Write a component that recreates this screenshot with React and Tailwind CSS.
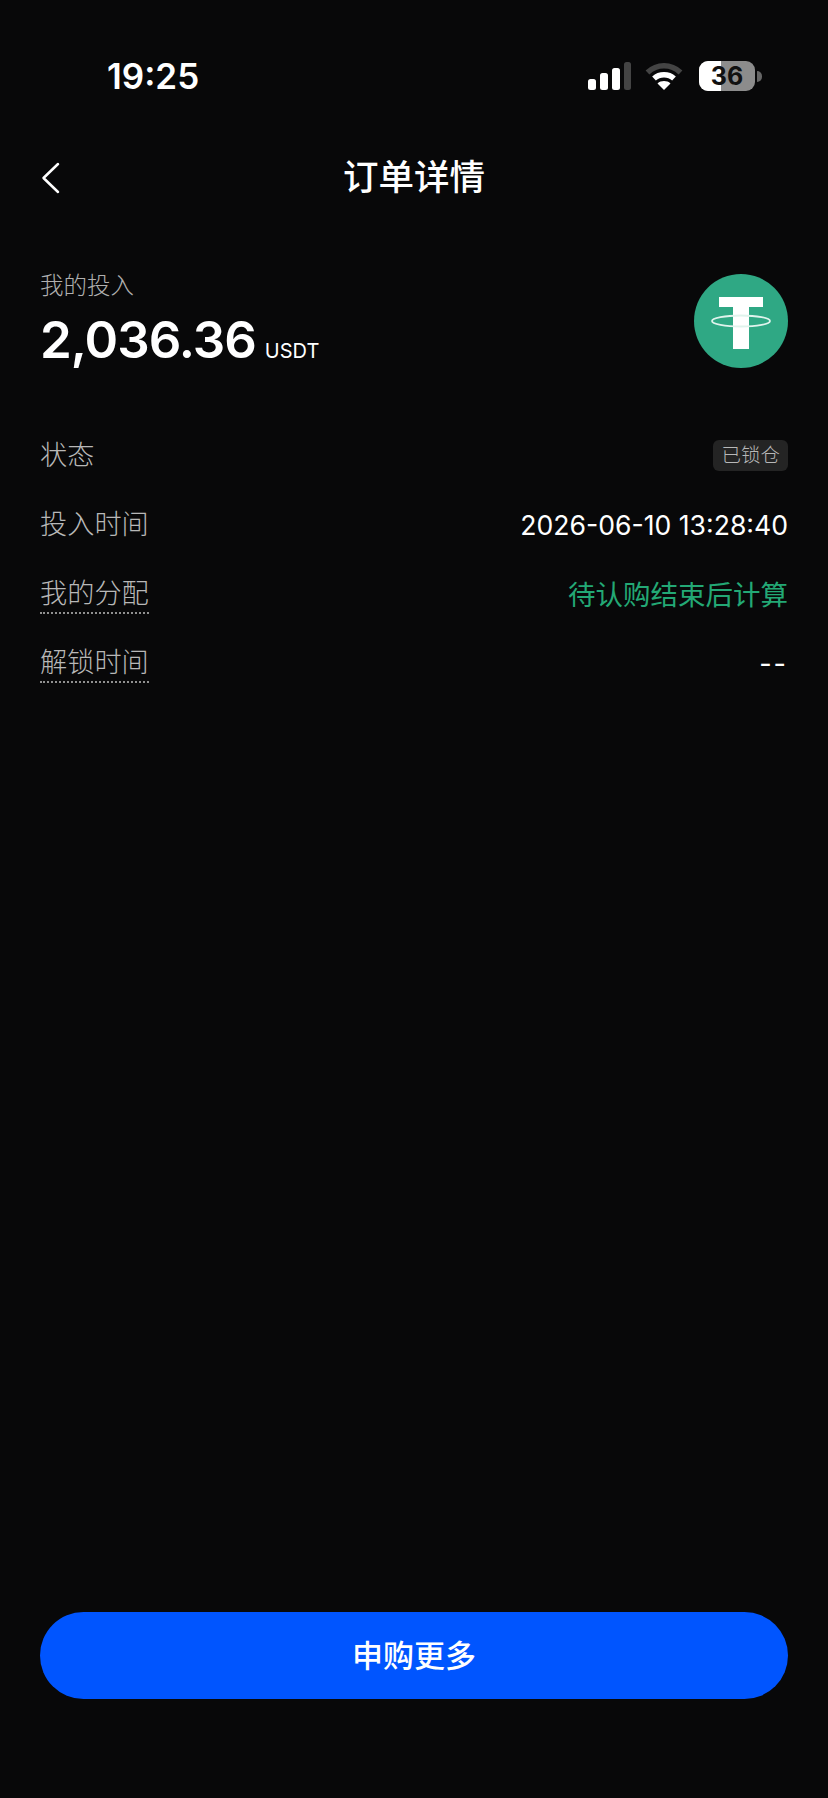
const font = { fontFamily: '"Inter", "Noto Sans CJK SC", sans-serif' };

function Row({ label, dotted, children }) {
  return (
    <div className="flex h-[69.5px] items-center justify-between">
      <span className={`text-[27.2px] leading-[36px] font-light text-[#b8b8b8] ${dotted ? "border-b-2 border-dotted border-[#909090]" : ""}`}>{label}</span>
      {children}
    </div>
  );
}

export default function App() {
  return (
    <div style={font} className="flex h-[1798px] w-[828px] flex-col bg-[#080809] text-white">
      <div className="flex h-[152px] shrink-0 items-start justify-between pt-[54px] pr-[66px] pl-[107px]">
        <span className="text-[35px] leading-[44px] font-semibold">19:25</span>
        <div className="flex items-center gap-[14px] pt-[7px]">
          <svg width="43" height="28" viewBox="0 0 43 28">
            <rect x="0" y="17" width="8" height="11" rx="2.5" fill="#fff" />
            <rect x="12" y="11" width="8" height="17" rx="2.5" fill="#fff" />
            <rect x="24" y="6" width="8" height="22" rx="2.5" fill="#fff" />
            <rect x="36" y="0" width="7" height="28" rx="2.5" fill="#444" />
          </svg>
          <svg width="38" height="28" viewBox="0 0 38 28" fill="none" strokeWidth="5.5">
            <path d="M2.5 10.5C12 1.5 26 1.5 35.5 10.5" stroke="#444" />
            <path d="M9 16.5C14.5 11.5 23.5 11.5 29 16.5" stroke="#fff" />
            <path d="M19 28L12.5 21.5C16 18.3 22 18.3 25.5 21.5Z" fill="#fff" stroke="none" />
          </svg>
          <div className="relative ml-[2px] flex h-[30px] w-[56px] items-center justify-center overflow-hidden rounded-[9px] bg-[#8c8c8c]">
            <div className="absolute inset-y-0 left-0 w-[22px] bg-white" />
            <span className="relative text-[25px] leading-none font-bold text-[#111]">36</span>
          </div>
          <div className="ml-[-12px] h-[11px] w-[5px] rounded-r-full bg-[#666]" />
        </div>
      </div>

      <div className="relative flex h-[50px] shrink-0 items-center justify-center">
        <svg className="absolute top-[10px] left-[40px]" width="24" height="32" viewBox="0 0 24 32" fill="none" stroke="#fff" strokeWidth="2.5" strokeLinecap="round" strokeLinejoin="round">
          <path d="M18 2L3.5 16L18 30" />
        </svg>
        <span className="pt-[2px] text-[35.5px] leading-[50px] font-medium">订单详情</span>
      </div>

      <div className="flex flex-col px-10">
        <div className="flex items-center justify-between pt-[68px]">
          <div className="flex flex-col">
            <span className="text-[23.5px] leading-[32px] font-light text-[#b0b0b0]">我的投入</span>
            <div className="mt-[6px] flex items-baseline gap-[9px]">
              <span className="text-[51px] leading-[64px] font-semibold tracking-[-1px]">2,036.36</span>
              <span className="text-[20px] leading-[28px]">USDT</span>
            </div>
          </div>
          <svg width="94" height="94" viewBox="0 0 94 94">
            <circle cx="47" cy="47" r="47" fill="#2fa884" />
            <path d="M25 23H69V33H55V75H39V33H25Z" fill="#fff" />
            <ellipse cx="47" cy="47" rx="29" ry="5.5" fill="none" stroke="#dff3ec" strokeWidth="1.8" />
          </svg>
        </div>

        <div className="mt-[49px] flex flex-col">
          <Row label="状态">
            <span className="rounded-[6px] bg-[#242424] px-[8px] py-[3px] text-[19.5px] leading-[25px] font-light text-[#b8b8b8]">已锁仓</span>
          </Row>
          <Row label="投入时间">
            <span className="text-[26.6px] leading-[36px] text-white">2026-06-10 13:28:40</span>
          </Row>
          <Row label="我的分配" dotted>
            <span className="text-[27.5px] leading-[36px] font-normal text-[#23a875]">待认购结束后计算</span>
          </Row>
          <Row label="解锁时间" dotted>
            <span className="text-[27px] leading-[36px] tracking-[2px] text-white">--</span>
          </Row>
        </div>
      </div>

      <div className="mt-auto px-10 pb-[99px]">
        <button className="flex h-[87px] w-full items-center justify-center rounded-full bg-[#0055ff] pt-[2px] text-[31px] font-medium text-white">申购更多</button>
      </div>
    </div>
  );
}
